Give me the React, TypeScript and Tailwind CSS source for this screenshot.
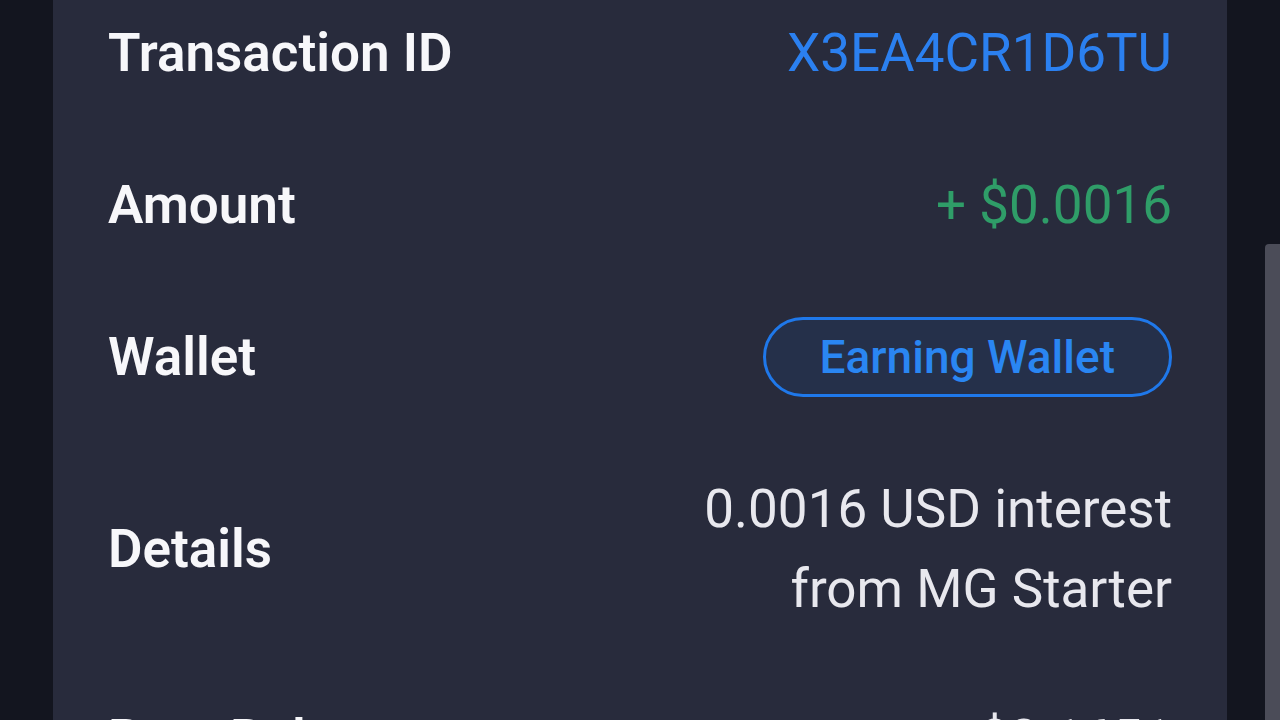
import type { ReactNode } from "react";

type Row = {
    label: string;
    value: ReactNode;
    pad?: string;
};

const rows: Row[] = [
    {
        label: "Transaction ID",
        value: <span className="text-[#2b80f0]">X3EA4CR1D6TU</span>,
    },
    {
        label: "Amount",
        value: <span className="text-[#2f9d68]">+ $0.0016</span>,
    },
    {
        label: "Wallet",
        value: (
            <span className="flex items-center justify-center h-[80px] px-[54px] rounded-full border-[3px] border-[#1f78ea] bg-[#25304a] text-[46px] leading-none text-[#2a86f2] font-medium">
                Earning Wallet
            </span>
        ),
    },
    {
        label: "Details",
        value: (
            <span className="text-[#e8e8ee]">
                0.0016 USD interest
                <br />
                from MG Starter
            </span>
        ),
        pad: "pt-[36px] pb-[34px]",
    },
    {
        label: "Post Balance",
        value: <span className="text-[#e8e8ee]">$0.1651</span>,
    },
];

const App = () => {
    return (
        <div
            className="relative h-[720px] w-[1280px] overflow-hidden bg-[#13151f]"
            style={{ fontFamily: "Roboto, 'Noto Sans', sans-serif" }}
        >
            <div className="ml-[53px] w-[1174px] h-full overflow-hidden bg-[#282b3c]">
                <div className="-mt-[23px] px-[55px]">
                    {rows.map((row) => (
                        <div
                            key={row.label}
                            className={`flex items-center justify-between ${row.pad ?? "py-[36px]"}`}
                        >
                            <div className="text-[53px] leading-[80px] font-semibold text-[#f7f7fa]">
                                {row.label}
                            </div>
                            <div className="flex justify-end text-right text-[53px] leading-[80px]">
                                {row.value}
                            </div>
                        </div>
                    ))}
                </div>
            </div>

            {/* scrollbar thumb */}
            <div className="absolute left-[1265px] top-[244px] w-[20px] h-[500px] rounded-tl-[4px] bg-[#4b4c58]" />
        </div>
    );
};

export default App;
